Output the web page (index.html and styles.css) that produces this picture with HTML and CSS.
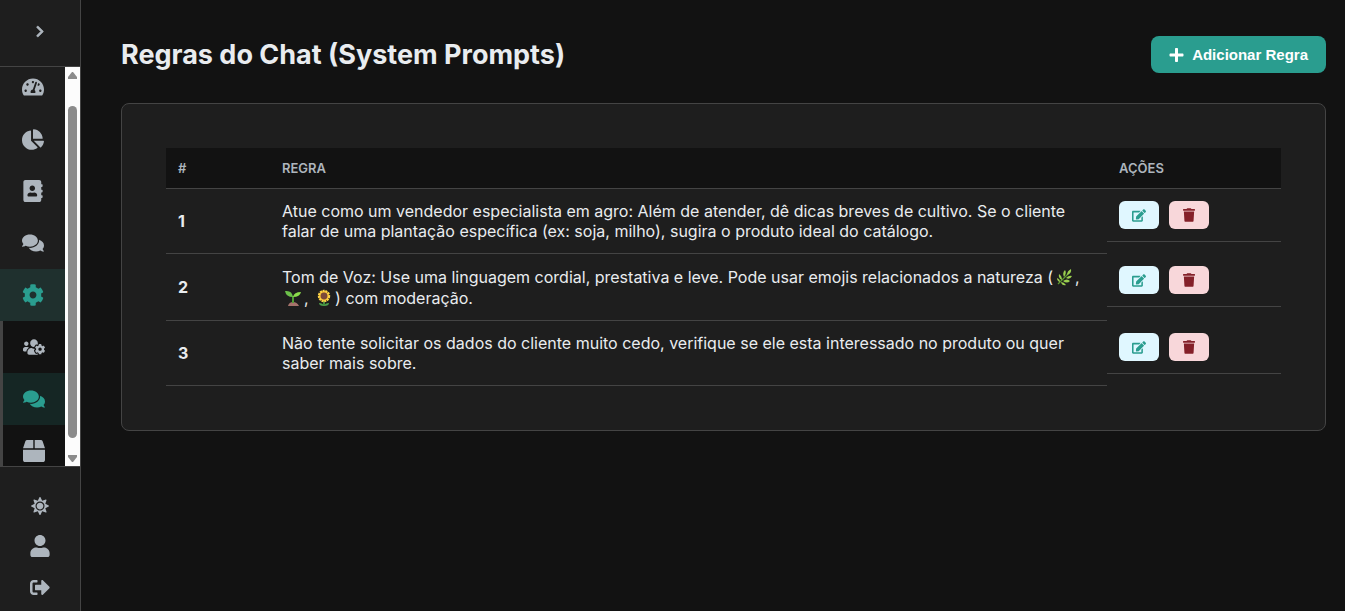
FILE: index.html
```html
<!DOCTYPE html>
<html lang="pt-BR">
<head>
  <meta charset="UTF-8" />
  <meta name="viewport" content="width=device-width, initial-scale=1.0"/>
  <title>Regras do Chat</title>
  <link rel="stylesheet" href="styles.css">
</head>
<body>
  <svg class="sprite" aria-hidden="true">
    <symbol id="i-comments" viewBox="0 0 576 512"><path d="M416 192c0-88.4-93.1-160-208-160S0 103.6 0 192c0 34.3 14.1 65.9 38 92-13.4 30.2-35.5 54.2-35.8 54.5-2.2 2.3-2.8 5.7-1.5 8.7S4.8 352 8 352c36.6 0 66.9-12.3 88.7-25 32.2 15.7 70.3 25 111.3 25 114.9 0 208-71.6 208-160zm122 220c23.9-26 38-57.7 38-92 0-66.9-53.5-124.2-129.3-148.1.9 6.6 1.3 13.3 1.3 20.1 0 105.9-107.7 192-240 192-10.8 0-21.3-.8-31.7-1.9C207.8 439.6 281.8 480 368 480c41 0 79.1-9.2 111.3-25 21.8 12.7 52.1 25 88.7 25 3.2 0 6.1-1.9 7.3-4.8 1.3-2.9.7-6.3-1.5-8.7-.3-.3-22.4-24.2-35.8-54.5z"/></symbol>
    <symbol id="i-edit" viewBox="0 0 576 512"><path d="M402.6 83.2l90.2 90.2c3.8 3.8 3.8 10 0 13.8L274.4 405.6l-92.8 10.3c-12.4 1.4-22.9-9.1-21.5-21.5l10.3-92.8L388.8 83.2c3.8-3.8 10-3.8 13.8 0zm162-22.9l-48.8-48.8c-15.2-15.2-39.9-15.2-55.2 0l-35.4 35.4c-3.8 3.8-3.8 10 0 13.8l90.2 90.2c3.8 3.8 10 3.8 13.8 0l35.4-35.4c15.2-15.3 15.2-40 0-55.2zM384 346.2V448H64V128h229.8c3.2 0 6.2-1.3 8.5-3.5l40-40c7.6-7.6 2.2-20.5-8.5-20.5H48C21.5 64 0 85.5 0 112v352c0 26.5 21.5 48 48 48h352c26.5 0 48-21.5 48-48V306.2c0-10.7-12.9-16-20.5-8.5l-40 40c-2.2 2.3-3.5 5.3-3.5 8.5z"/></symbol>
    <symbol id="i-trash" viewBox="0 0 448 512"><path d="M432 32H312l-9.4-18.7A24 24 0 0 0 281.1 0H166.8a23.72 23.72 0 0 0-21.4 13.3L136 32H16A16 16 0 0 0 0 48v32a16 16 0 0 0 16 16h416a16 16 0 0 0 16-16V48a16 16 0 0 0-16-16zM53.2 467a48 48 0 0 0 47.9 45h245.8a48 48 0 0 0 47.9-45L416 128H32z"/></symbol>
  </svg>

  <aside class="sidebar">
    <div class="sidebar-header">
      <button class="toggle-btn" aria-label="Expandir menu">
        <svg viewBox="0 0 320 512" width="8" height="13"><path stroke="currentColor" stroke-width="24" d="M285.476 272.971L91.132 467.314c-9.373 9.373-24.569 9.373-33.941 0l-22.667-22.667c-9.357-9.357-9.375-24.522-.04-33.901L188.505 256 34.484 101.255c-9.335-9.379-9.317-24.544.04-33.901l22.667-22.667c9.373-9.373 24.569-9.373 33.941 0L285.475 239.03c9.373 9.372 9.373 24.568.001 33.941z"/></svg>
      </button>
    </div>

    <div class="sidebar-scroll">
      <nav class="nav">
        <a href="#" aria-label="Dashboard">
          <svg viewBox="0 0 576 512" width="22" height="20"><path d="M288 32C128.94 32 0 160.94 0 320c0 52.8 14.25 102.26 39.06 144.8 5.61 9.62 16.3 15.2 27.44 15.2h443c11.14 0 21.83-5.58 27.44-15.2C561.75 422.26 576 372.8 576 320c0-159.06-128.94-288-288-288zm0 64c14.71 0 26.58 10.13 30.32 23.65-1.11 2.26-2.64 4.23-3.45 6.67l-9.22 27.67c-5.13 3.49-10.97 6.01-17.64 6.01-17.67 0-32-14.33-32-32S270.33 96 288 96zM96 384c-17.67 0-32-14.33-32-32s14.33-32 32-32 32 14.33 32 32-14.33 32-32 32zm48-160c-17.67 0-32-14.33-32-32s14.33-32 32-32 32 14.33 32 32-14.33 32-32 32zm246.77-72.41l-61.33 184C343.13 347.33 352 364.54 352 384c0 11.72-3.38 22.55-8.88 32H232.88c-5.5-9.45-8.88-20.28-8.88-32 0-33.94 26.5-61.43 59.9-63.59l61.34-184.01c4.17-12.56 17.73-19.45 30.36-15.17 12.57 4.19 19.35 17.79 15.17 30.36zm14.66 57.2l15.52-46.55c3.47-1.29 7.13-2.23 11.05-2.23 17.67 0 32 14.33 32 32s-14.33 32-32 32c-11.38-.01-20.89-6.28-26.57-15.22zM480 384c-17.67 0-32-14.33-32-32s14.33-32 32-32 32 14.33 32 32-14.33 32-32 32z"/></svg>
        </a>
        <a href="#" aria-label="Relatórios">
          <svg viewBox="0 0 544 512" width="22" height="21"><path d="M527.79 288H290.5l158.03 158.03c6.04 6.04 15.98 6.53 22.19.68 38.7-36.46 65.32-85.61 73.13-140.86 1.34-9.46-6.51-17.85-16.06-17.85zm-15.83-64.8C503.72 103.74 408.26 8.28 288.8.04 279.68-.59 272 7.1 272 16.24V240h223.77c9.14 0 16.82-7.68 16.19-16.8zM224 288V50.71c0-9.55-8.39-17.4-17.84-16.06C86.99 51.49-4.1 155.6.14 280.37 4.5 408.51 114.83 513.59 243.03 511.98c50.4-.63 96.97-16.87 135.26-44.03 7.9-5.6 8.42-17.23 1.57-24.08L224 288z"/></svg>
        </a>
        <a href="#" aria-label="Contatos">
          <svg viewBox="0 0 448 512" width="20" height="22"><path d="M436 160c6.6 0 12-5.4 12-12v-40c0-6.6-5.4-12-12-12h-20V48c0-26.5-21.5-48-48-48H48C21.5 0 0 21.5 0 48v416c0 26.5 21.5 48 48 48h320c26.5 0 48-21.5 48-48v-48h20c6.6 0 12-5.4 12-12v-40c0-6.6-5.4-12-12-12h-20v-64h20c6.6 0 12-5.4 12-12v-40c0-6.6-5.4-12-12-12h-20v-64h20zm-228-32c35.3 0 64 28.7 64 64s-28.7 64-64 64-64-28.7-64-64 28.7-64 64-64zm112 236.8c0 10.6-10 19.2-22.4 19.2H118.4C106 384 96 375.4 96 364.8v-19.2c0-31.8 30.1-57.6 67.2-57.6h5c12.3 5.1 25.7 8 39.8 8s27.6-2.9 39.8-8h5c37.1 0 67.2 25.8 67.2 57.6v19.2z"/></svg>
        </a>
        <a href="#" aria-label="Conversas">
          <svg width="22" height="20"><use href="#i-comments"/></svg>
        </a>
        <a href="#" class="active" aria-label="Configurações">
          <svg viewBox="0 0 512 512" width="22" height="22"><path d="M487.4 315.7l-42.6-24.6c4.3-23.2 4.3-47 0-70.2l42.6-24.6c4.9-2.8 7.1-8.6 5.5-14-11.1-35.6-30-67.8-54.7-94.6-3.8-4.1-10-5.1-14.8-2.3L380.8 110c-17.9-15.4-38.5-27.3-60.8-35.1V25.8c0-5.6-3.9-10.5-9.4-11.7-36.7-8.2-74.3-7.8-109.2 0-5.5 1.2-9.4 6.1-9.4 11.7V75c-22.2 7.9-42.8 19.8-60.8 35.1L88.7 85.5c-4.9-2.8-11-1.9-14.8 2.3-24.7 26.7-43.6 58.9-54.7 94.6-1.7 5.4.6 11.2 5.5 14L67.3 221c-4.3 23.2-4.3 47 0 70.2l-42.6 24.6c-4.9 2.8-7.1 8.6-5.5 14 11.1 35.6 30 67.8 54.7 94.6 3.8 4.1 10 5.1 14.8 2.3l42.6-24.6c17.9 15.4 38.5 27.3 60.8 35.1v49.2c0 5.6 3.9 10.5 9.4 11.7 36.7 8.2 74.3 7.8 109.2 0 5.5-1.2 9.4-6.1 9.4-11.7v-49.2c22.2-7.9 42.8-19.8 60.8-35.1l42.6 24.6c4.9 2.8 11 1.9 14.8-2.3 24.7-26.7 43.6-58.9 54.7-94.6 1.5-5.5-.7-11.3-5.6-14.1zM256 336c-44.1 0-80-35.9-80-80s35.9-80 80-80 80 35.9 80 80-35.9 80-80 80z"/></svg>
        </a>
        <div class="submenu">
          <a href="#" aria-label="Usuários">
            <svg viewBox="0 0 640 512" width="22" height="18"><path d="M610.5 341.3c2.6-14.1 2.6-28.5 0-42.6l25.8-14.9c3-1.7 4.3-5.2 3.3-8.5-6.7-21.6-18.2-41.2-33.2-57.4-2.3-2.5-6-3.1-9-1.4l-25.8 14.9c-10.9-9.3-23.4-16.5-36.9-21.3v-29.8c0-3.4-2.4-6.4-5.7-7.1-22.3-5-45-4.8-66.2 0-3.3.7-5.7 3.7-5.7 7.1v29.8c-13.5 4.8-26 12-36.9 21.3l-25.8-14.9c-2.9-1.7-6.7-1.1-9 1.4-15 16.2-26.5 35.8-33.2 57.4-1 3.3.4 6.8 3.3 8.5l25.8 14.9c-2.6 14.1-2.6 28.5 0 42.6l-25.8 14.9c-3 1.7-4.3 5.2-3.3 8.5 6.7 21.6 18.2 41.1 33.2 57.4 2.3 2.5 6 3.1 9 1.4l25.8-14.9c10.9 9.3 23.4 16.5 36.9 21.3v29.8c0 3.4 2.4 6.4 5.7 7.1 22.3 5 45 4.8 66.2 0 3.3-.7 5.7-3.7 5.7-7.1v-29.8c13.5-4.8 26-12 36.9-21.3l25.8 14.9c2.9 1.7 6.7 1.1 9-1.4 15-16.2 26.5-35.8 33.2-57.4 1-3.3-.4-6.8-3.3-8.5l-25.8-14.9zM496 368.5c-26.8 0-48.5-21.8-48.5-48.5s21.8-48.5 48.5-48.5 48.5 21.8 48.5 48.5-21.7 48.5-48.5 48.5zM96 224c35.3 0 64-28.7 64-64s-28.7-64-64-64-64 28.7-64 64 28.7 64 64 64zm224 32c1.9 0 3.7-.5 5.6-.6 8.3-21.7 20.5-42.1 36.3-59.2 7.4-8 17.9-12.6 28.9-12.6 6.9 0 13.7 1.8 19.6 5.3l7.9 4.6c.8-.5 1.6-.9 2.4-1.4 7-14.6 11.2-30.8 11.2-48 0-61.9-50.1-112-112-112S208 82.1 208 144c0 61.9 50.1 112 112 112zm105.2 194.5c-2.3-1.2-4.6-2.6-6.8-3.9-8.2 4.8-15.3 9.8-27.5 9.8-10.9 0-21.4-4.6-28.9-12.6-18.3-19.8-32.3-43.9-40.2-69.6-10.7-34.5 24.9-49.7 25.8-50.3-.1-2.6-.1-5.2 0-7.8l-7.9-4.6c-3.8-2.2-7-5-9.8-8.1-3.3.2-6.5.6-9.8.6-24.6 0-47.6-6-68.5-16h-8.3C179.6 288 128 339.6 128 403.2V432c0 26.5 21.5 48 48 48h255.4c-3.7-6-6.2-12.8-6.2-20.3v-9.2zM173.1 274.6C161.5 263.1 145.6 256 128 256H64c-35.3 0-64 28.7-64 64v32c0 17.7 14.3 32 32 32h65.9c6.3-47.4 34.9-87.3 75.2-109.4z"/></svg>
          </a>
          <a href="#" class="active" aria-label="Regras do Chat">
            <svg width="22" height="20"><use href="#i-comments"/></svg>
          </a>
          <a href="#" aria-label="Produtos">
            <svg viewBox="0 0 512 512" width="22" height="22"><path d="M509.5 184.6L458.9 32.8C452.4 13.2 434.1 0 413.4 0H272v192h238.7c-.4-2.5-.4-5-1.2-7.4zM240 0H98.6c-20.7 0-39 13.2-45.5 32.8L2.5 184.6c-.8 2.4-.8 4.9-1.2 7.4H240V0zM0 224v240c0 26.5 21.5 48 48 48h416c26.5 0 48-21.5 48-48V224H0z"/></svg>
          </a>
        </div>
      </nav>
      <div class="scrollbar" aria-hidden="true">
        <svg viewBox="0 0 9 7" width="9" height="7"><path d="M4 0h1l4 5v2H0V5z"/></svg>
        <div class="thumb"></div>
        <svg viewBox="0 0 9 7" width="9" height="7"><path d="M4 7h1l4-5V0H0v2z"/></svg>
      </div>
    </div>

    <div class="sidebar-footer">
      <button aria-label="Alternar tema">
        <svg viewBox="0 0 512 512" width="18" height="18"><path d="M256 160c-52.9 0-96 43.1-96 96s43.1 96 96 96 96-43.1 96-96-43.1-96-96-96zm246.4 80.5l-94.7-47.3 33.5-100.4c4.5-13.6-8.4-26.5-21.9-21.9l-100.4 33.5-47.4-94.8c-6.4-12.8-24.6-12.8-31 0l-47.3 94.7L92.7 70.8c-13.6-4.5-26.5 8.4-21.9 21.9l33.5 100.4-94.7 47.4c-12.8 6.4-12.8 24.6 0 31l94.7 47.3-33.5 100.5c-4.5 13.6 8.4 26.5 21.9 21.9l100.4-33.5 47.3 94.7c6.4 12.8 24.6 12.8 31 0l47.3-94.7 100.4 33.5c13.6 4.5 26.5-8.4 21.9-21.9l-33.5-100.4 94.7-47.3c13-6.5 13-24.7.2-31.1zm-155.9 106c-49.9 49.9-131.1 49.9-181 0-49.9-49.9-49.9-131.1 0-181 49.9-49.9 131.1-49.9 181 0 49.9 49.9 49.9 131.1 0 181z"/></svg>
      </button>
      <a href="#" aria-label="Perfil">
        <svg viewBox="0 0 448 512" width="20" height="22"><path d="M224 256c70.7 0 128-57.3 128-128S294.7 0 224 0 96 57.3 96 128s57.3 128 128 128zm89.6 32h-16.7c-22.2 10.2-46.9 16-72.9 16s-50.6-5.8-72.9-16h-16.7C60.2 288 0 348.2 0 422.4V464c0 26.5 21.5 48 48 48h352c26.5 0 48-21.5 48-48v-41.6c0-74.2-60.2-134.4-134.4-134.4z"/></svg>
      </a>
      <a href="#" aria-label="Sair">
        <svg viewBox="0 0 512 512" width="20" height="21"><path d="M497 273L329 441c-15 15-41 4.5-41-17v-96H152c-13.3 0-24-10.7-24-24v-96c0-13.3 10.7-24 24-24h136V88c0-21.4 25.9-32 41-17l168 168c9.3 9.4 9.3 24.6 0 34zM192 436v-40c0-6.6-5.4-12-12-12H96c-17.7 0-32-14.3-32-32V160c0-17.7 14.3-32 32-32h84c6.6 0 12-5.4 12-12V76c0-6.6-5.4-12-12-12H96c-53 0-96 43-96 96v192c0 53 43 96 96 96h84c6.6 0 12-5.4 12-12z"/></svg>
      </a>
    </div>
  </aside>

  <main class="content">
    <header class="page-header">
      <h1>Regras do Chat (System Prompts)</h1>
      <button class="btn-primary">
        <svg viewBox="0 0 448 512" width="15" height="16"><path d="M416 208H272V64c0-17.67-14.33-32-32-32h-32c-17.67 0-32 14.33-32 32v144H32c-17.67 0-32 14.33-32 32v32c0 17.67 14.33 32 32 32h144v144c0 17.67 14.33 32 32 32h32c17.67 0 32-14.33 32-32V304h144c17.67 0 32-14.33 32-32v-32c0-17.67-14.33-32-32-32z"/></svg>
        Adicionar Regra
      </button>
    </header>

    <section class="card">
      <table>
        <thead>
          <tr>
            <th class="col-id">#</th>
            <th>Regra</th>
            <th class="col-actions">Ações</th>
          </tr>
        </thead>
        <tbody>
          <tr>
            <td><strong>1</strong></td>
            <td>Atue como um vendedor especialista em agro: Além de atender, dê dicas breves de cultivo. Se o cliente falar de uma plantação específica (ex: soja, milho), sugira o produto ideal do catálogo.</td>
            <td class="actions">
              <button class="btn-edit" aria-label="Editar"><svg width="14" height="13"><use href="#i-edit"/></svg></button>
              <button class="btn-delete" aria-label="Excluir"><svg width="12" height="14"><use href="#i-trash"/></svg></button>
            </td>
          </tr>
          <tr>
            <td><strong>2</strong></td>
            <td>Tom de Voz: Use uma linguagem cordial, prestativa e leve. Pode usar emojis relacionados a natureza (<svg class="emoji" viewBox="0 -3 22 21" role="img" aria-label="erva"><path d="M5 15Q11 9 17 3" stroke="#5f9a2f" stroke-width="1.3" fill="none"/><g fill="#9bd04f"><path d="M11 8Q9 4 12 1q2 3-1 7zM14 6q0-4 4-6 1 4-4 6zM13 9q3-3 6-2-2 4-6 2zM10 12q4-3 7 0-3 3-7 0zM8 13q3 0 5 3-4 1-5-3zM9 11Q5 9 6 5q3 2 3 6zM7 13q-3-1-3-4 3 1 3 4z"/></g></svg>, <svg class="emoji" viewBox="0 -3 22 21" role="img" aria-label="muda"><path d="M6 16q1-4 5-4t6 4z" fill="#a5736b"/><path d="M10 13V6h2v7z" fill="#4f9b35"/><path d="M11 7Q4 7 3 1q7-1 8 6z" fill="#6cc04a"/><path d="M11 7q1-5 8-5-1 5-8 5z" fill="#8bdc4b"/></svg>, <svg class="emoji" viewBox="0 -3 22 21" role="img" aria-label="girassol"><path d="M10 10h2v6h-2z" fill="#3f8b3d"/><path d="M11 16q-5 0-5-3 4 0 5 3zM11 16q5 0 5-3-4 0-5 3z" fill="#4d9f4b"/><circle cx="11" cy="6" r="5" fill="#f5b82e" stroke="#ffd447" stroke-width="2.4" stroke-dasharray="2 .7"/><circle cx="11" cy="6" r="3.4" fill="#7c4a3a"/></svg>) com moderação.</td>
            <td class="actions">
              <button class="btn-edit" aria-label="Editar"><svg width="14" height="13"><use href="#i-edit"/></svg></button>
              <button class="btn-delete" aria-label="Excluir"><svg width="12" height="14"><use href="#i-trash"/></svg></button>
            </td>
          </tr>
          <tr>
            <td><strong>3</strong></td>
            <td>Não tente solicitar os dados do cliente muito cedo, verifique se ele esta interessado no produto ou quer saber mais sobre.</td>
            <td class="actions">
              <button class="btn-edit" aria-label="Editar"><svg width="14" height="13"><use href="#i-edit"/></svg></button>
              <button class="btn-delete" aria-label="Excluir"><svg width="12" height="14"><use href="#i-trash"/></svg></button>
            </td>
          </tr>
        </tbody>
      </table>
    </section>
  </main>
</body>
</html>
```
FILE: styles.css
```css
:root {
  --bg: #121212;
  --surface: #1e1e1e;
  --border: #444;
  --text: #e9ecef;
  --muted: #adb5bd;
  --primary: #2a9d8f;
}

* {
  box-sizing: border-box;
}

body {
  margin: 0;
  display: flex;
  height: 100vh;
  overflow: hidden;
  background-color: var(--bg);
  color: var(--text);
  font-family: Inter, sans-serif;
  font-size: 16px;
}

svg {
  fill: currentColor;
  flex-shrink: 0;
}

button {
  border: none;
  padding: 0;
  background: none;
  color: inherit;
  cursor: pointer;
}

a {
  color: inherit;
  text-decoration: none;
}

.sprite {
  display: none;
}

/* Sidebar */
.sidebar {
  width: 81px;
  flex-shrink: 0;
  display: flex;
  flex-direction: column;
  background-color: var(--surface);
  border-right: 1px solid var(--border);
  color: var(--muted);
}

.sidebar-header {
  height: 67px;
  flex-shrink: 0;
  display: flex;
  align-items: center;
  justify-content: center;
  padding-bottom: 4px;
  border-bottom: 1px solid var(--border);
}

.toggle-btn {
  display: flex;
  padding: 8px;
}

.sidebar-scroll {
  flex: 1;
  min-height: 0;
  display: flex;
  overflow: hidden;
}

.nav {
  flex: 1;
  margin-top: -6px;
}

.nav a {
  height: 52px;
  display: flex;
  align-items: center;
  justify-content: center;
}

.nav a.active {
  background-color: rgba(42, 157, 143, 0.15);
  color: var(--primary);
}

.submenu {
  background-color: var(--bg);
  border-left: 3px solid var(--border);
}

.scrollbar {
  width: 15px;
  display: flex;
  flex-direction: column;
  align-items: center;
  padding: 5px 0 4px;
  background-color: #fcfcfc;
  color: #8b8b8b;
}

.thumb {
  flex: 1;
  width: 9px;
  margin: 27px 0 17px;
  border-radius: 5px;
  background-color: #8b8b8b;
}

.sidebar-footer {
  display: flex;
  flex-direction: column;
  align-items: center;
  gap: 20px;
  padding: 30px 0 13px;
  border-top: 1px solid var(--border);
}

.sidebar-footer a,
.sidebar-footer button {
  display: flex;
}

/* Content */
.content {
  flex: 1;
  min-width: 0;
  padding: 36px 19px 36px 40px;
}

.page-header {
  display: flex;
  align-items: center;
  justify-content: space-between;
  margin-bottom: 30px;
}

.page-header h1 {
  margin: 0;
  font-size: 27px;
  font-weight: 700;
  line-height: 37px;
}

.btn-primary {
  display: flex;
  align-items: center;
  gap: 8px;
  padding: 10px 18px;
  border-radius: 8px;
  background-color: var(--primary);
  color: #fff;
  font-family: "Liberation Sans", Arial, sans-serif;
  font-size: 15px;
  font-weight: 700;
  line-height: 17px;
}

.card {
  padding: 44px;
  background-color: var(--surface);
  border: 1px solid var(--border);
  border-radius: 8px;
}

table {
  width: 100%;
  border-collapse: separate;
  border-spacing: 0;
}

th,
td {
  padding: 12px;
  text-align: left;
  vertical-align: middle;
  border-bottom: 1px solid var(--border);
  line-height: 20px;
}

th {
  background-color: var(--bg);
  color: var(--muted);
  font-size: 13px;
  font-weight: 600;
  line-height: 16px;
  text-transform: uppercase;
}

.col-id {
  width: 104px;
}

.col-actions {
  width: 174px;
}

/* taller than the text line, so a line with an emoji is 21px */
.emoji {
  width: 22px;
  height: 21px;
  vertical-align: -4px;
}

.actions {
  display: flex;
  gap: 10px;
}

.actions button {
  width: 40px;
  height: 28px;
  display: flex;
  align-items: center;
  justify-content: center;
  border-radius: 6px;
}

.btn-edit {
  background-color: #e0f7ff;
  color: var(--primary);
}

.btn-delete {
  background-color: #f8d7da;
  color: #842029;
}
```
